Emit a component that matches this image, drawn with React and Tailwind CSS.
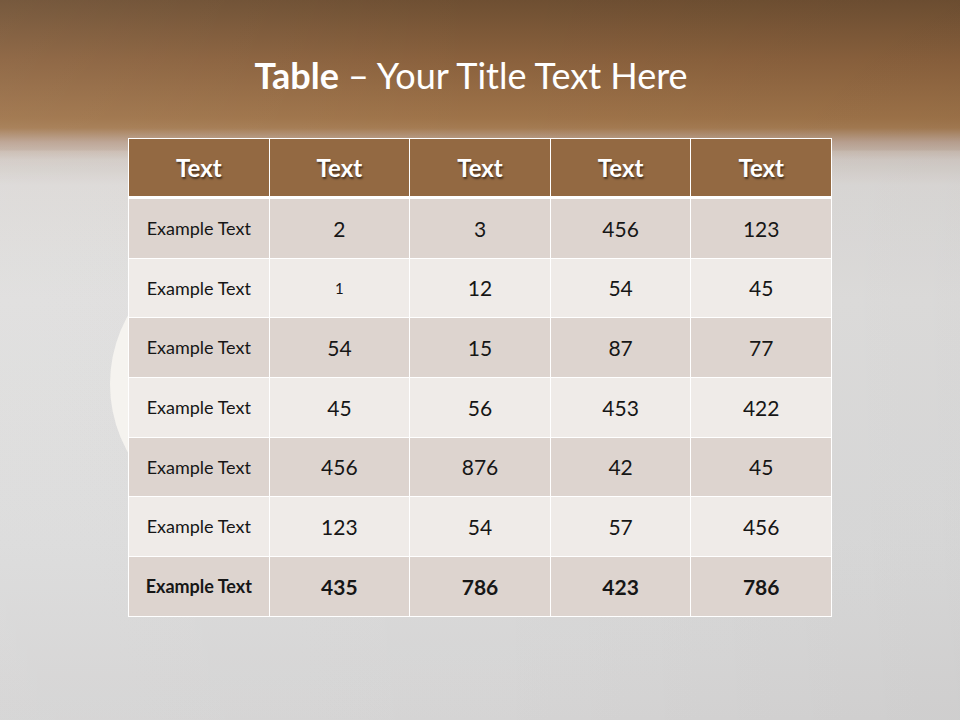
import React from "react";

const rows = [
  ["Example Text", "2", "3", "456", "123"],
  ["Example Text", "1", "12", "54", "45"],
  ["Example Text", "54", "15", "87", "77"],
  ["Example Text", "45", "56", "453", "422"],
  ["Example Text", "456", "876", "42", "45"],
  ["Example Text", "123", "54", "57", "456"],
  ["Example Text", "435", "786", "423", "786"],
];

export default function App() {
  return (
    <div
      className="relative w-[960px] h-[720px] overflow-hidden flex flex-col items-center bg-[linear-gradient(to_bottom,rgba(255,255,255,0)_150px,rgba(255,255,255,0.1)_151px,rgba(255,255,255,0.1)_100%),linear-gradient(to_right,rgba(255,255,255,0.06),rgba(255,255,255,0)_50%,rgba(0,0,0,0.03)),linear-gradient(to_bottom,#6e4f32_0px,#8a613d_60px,#9e7349_118px,#a47b52_128px,#bba291_142px,#cdc5bf_160px,#d8d5d3_185px,#dcdbda_300px,#d7d7d7_540px,#d0cfcf_720px)]"
      style={{ fontFamily: "Lato, 'Open Sans', sans-serif" }}
    >
      {/* faint egg shape behind the table */}
      <div className="absolute left-[110px] top-[244px] w-[280px] h-[280px] rounded-full bg-[#f5f3ef]" />

      <h1 className="relative pt-[53px] pr-[18px] text-[36px] leading-[44px] text-white">
        <span className="font-bold">Table</span> – Your Title Text Here
      </h1>

      <div className="relative mt-[41px] w-[704px] bg-white p-px">
        <div className="grid grid-cols-5 gap-px">
          {["Text", "Text", "Text", "Text", "Text"].map((t, i) => (
            <div
              key={i}
              className="h-[57px] flex items-center justify-center bg-[#936942] text-white font-bold text-[24px] [text-shadow:1px_2px_2px_rgba(0,0,0,0.55)]"
            >
              {t}
            </div>
          ))}
        </div>
        <div className="mt-[3px] grid grid-cols-5 gap-px">
          {rows.map((r, ri) =>
            r.map((c, ci) => {
              const bold = ri === rows.length - 1;
              const bg = ri % 2 === 0 ? "bg-[#ddd4cf]" : "bg-[#efebe8]";
              const size =
                ci === 0
                  ? "text-[18px]"
                  : ri === 1 && ci === 1
                  ? "text-[15px]"
                  : "text-[21px]";
              return (
                <div
                  key={ri + "-" + ci}
                  className={`h-[58.7px] flex items-center justify-center text-[#161616] ${bg} ${size} ${
                    bold ? "font-bold" : ""
                  }`}
                >
                  {c}
                </div>
              );
            })
          )}
        </div>
      </div>
    </div>
  );
}
